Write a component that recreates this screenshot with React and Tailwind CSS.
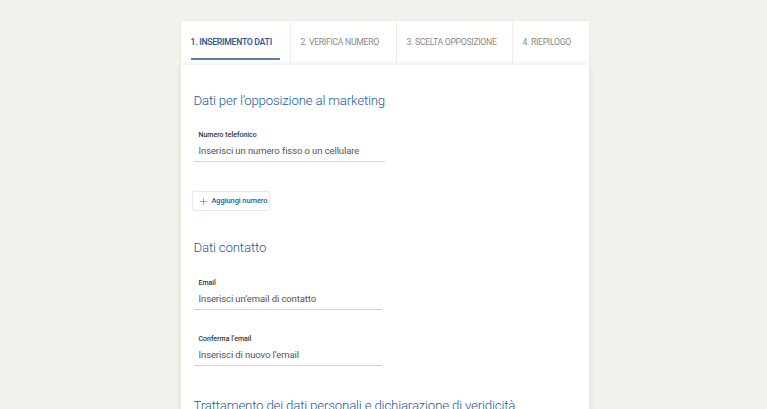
import { Plus } from "lucide-react";

const steps = [
  { label: "1. Inserimento dati", width: "w-[109px]", active: true },
  { label: "2. Verifica numero", width: "w-[106px]" },
  { label: "3. Scelta opposizione", width: "w-[116px]" },
  { label: "4. Riepilogo", width: "flex-1" },
];

function Field({ label, placeholder, width }) {
  return (
    <div className={`flex flex-col ${width}`}>
      <span className="pl-[5px] text-[7px] font-medium leading-[10px] text-[#333]">{label}</span>
      <div className="mt-[5px] border-b border-[#d6d6d6] pb-[4px] pl-[5px] text-[9.5px] leading-[12px] tracking-[-0.1px] text-[#555]">
        {placeholder}
      </div>
    </div>
  );
}

export default function App() {
  return (
    <main
      className="h-[409px] w-full overflow-hidden bg-[#f2f2ed] pt-[21px]"
      style={{ fontFamily: "Roboto, 'Liberation Sans', sans-serif" }}
    >
      <div className="mx-auto w-[408px] translate-x-[1px]">
        {/* Wizard steps */}
        <nav className="flex h-[44px] bg-white shadow-[0_0_3px_rgba(0,0,0,0.06)]">
          {steps.map((step, i) => (
            <div
              key={step.label}
              className={`relative flex items-center whitespace-nowrap pl-[10px] text-[8.7px] uppercase tracking-[-0.3px] ${step.width} ${
                i > 0 ? "border-l border-[#eeeeee]" : ""
              } ${step.active ? "font-semibold text-[#2f5d92]" : "text-[#8a8a8a]"}`}
            >
              {step.label}
              {step.active && (
                <span className="absolute bottom-[5px] left-[10px] right-[10px] h-[2px] bg-[#5b7fa7]" />
              )}
            </div>
          ))}
        </nav>

        {/* Form card */}
        <section className="flex h-[400px] flex-col bg-white pl-[13px] pt-[27px] shadow-[0_0_6px_rgba(0,0,0,0.12)]">
          <h2 className="text-[13.3px] font-light leading-[18px] tracking-[-0.2px] text-[#1f5aa0]">
            Dati per l’opposizione al marketing
          </h2>

          <div className="mt-[20px]">
            <Field label="Numero telefonico" placeholder="Inserisci un numero fisso o un cellulare" width="w-[191px]" />
          </div>

          <button
            type="button"
            className="mt-[29px] flex h-[20px] w-[78px] -translate-x-[2px] items-center gap-[3px] whitespace-nowrap rounded-[2px] border border-[#e6e9ee] pl-[5px] text-[7.5px] font-medium tracking-[-0.1px] text-[#2f5d92] shadow-[0_0_2px_rgba(0,0,0,0.05)]"
          >
            <Plus size={11} strokeWidth={1.2} className="text-[#3d6696]" />
            Aggiungi numero
          </button>

          <h2 className="mt-[28px] text-[13.3px] font-light leading-[18px] tracking-[-0.2px] text-[#1f5aa0]">
            Dati contatto
          </h2>

          <div className="mt-[21px]">
            <Field label="Email" placeholder="Inserisci un’email di contatto" width="w-[188px]" />
          </div>
          <div className="mt-[24px]">
            <Field label="Conferma l’email" placeholder="Inserisci di nuovo l’email" width="w-[188px]" />
          </div>

          <h2 className="mt-[31px] text-[13.3px] font-light leading-[18px] tracking-[-0.2px] text-[#1f5aa0]">
            Trattamento dei dati personali e dichiarazione di veridicità
          </h2>
        </section>
      </div>
    </main>
  );
}
